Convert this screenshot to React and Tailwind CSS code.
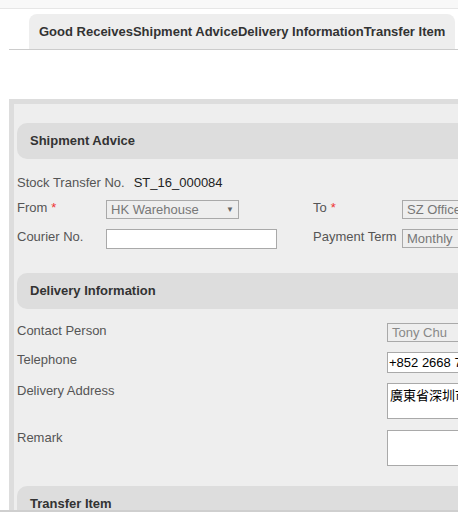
import React from 'react';

const font = { fontFamily: '"Liberation Sans", Arial, "Noto Sans CJK TC", sans-serif' };

const SectionHeader = ({ title }) => (
  <div className="h-[36px] rounded-[10px] bg-[#dddddd] flex items-center pl-[13px] text-[13px] font-bold text-[#333]">
    {title}
  </div>
);

const Select = ({ value, width }) => (
  <div
    className="h-[19px] border border-[#a9a9a9] bg-[#eee] flex items-center justify-between px-[4px] text-[13px] text-[#777] shrink-0"
    style={{ width }}
  >
    <span className="whitespace-nowrap">{value}</span>
    <span className="text-[8px] text-[#666]">▼</span>
  </div>
);

const Label = ({ children, req, className = '' }) => (
  <div className={`text-[13px] text-[#555] whitespace-nowrap ${className}`}>
    {children}
    {req && <span className="text-[#e33] ml-[4px]">*</span>}
  </div>
);

const App = () => {
  return (
    <div className="relative w-[458px] h-[512px] overflow-hidden bg-white" style={font}>
      <div className="h-[9px] bg-[#f8f8f8] border-b border-[#e6e6e6]" />
      <div className="ml-[9px] w-[600px] pt-[5px] pl-[20px] border-b border-[#cccccc]">
        <div className="w-[426px] h-[35px] rounded-t-[8px] bg-[#eeeeee] flex items-center pl-[10px] text-[13px] font-bold text-[#333] whitespace-nowrap">
          <span>Good Receives</span>
          <span>Shipment Advice</span>
          <span>Delivery Information</span>
          <span>Transfer Item</span>
        </div>
      </div>

      <div className="ml-[9px] mt-[49px] w-[700px] border-l-[5px] border-t-[5px] border-[#dddddd] bg-[#eeeeee] pl-[3px] pt-[19px]">
        <SectionHeader title="Shipment Advice" />

        <div className="mt-[15px] h-[18px] flex items-center text-[13px]">
          <span className="text-[#555]">Stock Transfer No.</span>
          <span className="ml-[9px] text-[#222]">ST_16_000084</span>
        </div>

        <div className="mt-[8px] flex items-start">
          <div className="w-[296px] flex items-start">
            <Label req className="w-[89px] leading-[16px]">From</Label>
            <Select value="HK Warehouse" width={133} />
          </div>
          <Label req className="w-[89px] leading-[16px]">To</Label>
          <Select value="SZ Office" width={120} />
        </div>

        <div className="mt-[10px] flex items-start">
          <div className="w-[296px] flex items-start">
            <Label className="w-[89px] leading-[16px]">Courier No.</Label>
            <div className="w-[171px] h-[20px] border border-[#a9a9a9] bg-white" />
          </div>
          <Label className="w-[89px] leading-[16px]">Payment Term</Label>
          <Select value="Monthly" width={120} />
        </div>

        <div className="mt-[24px]">
          <SectionHeader title="Delivery Information" />
        </div>

        <div className="mt-[14px] flex items-start">
          <Label className="w-[370px] leading-[16px]">Contact Person</Label>
          <div className="w-[120px] h-[19px] border border-[#a9a9a9] bg-[#eee] flex items-center px-[4px] text-[13px] text-[#888]">
            Tony Chu
          </div>
        </div>

        <div className="mt-[10px] flex items-start">
          <Label className="w-[370px] leading-[16px]">Telephone</Label>
          <div className="w-[120px] h-[21px] border border-[#a9a9a9] bg-white flex items-center px-[1px] text-[13px] text-black whitespace-nowrap">
            +852 2668 7788
          </div>
        </div>

        <div className="mt-[10px] flex items-start">
          <Label className="w-[370px] leading-[16px]">Delivery Address</Label>
          <div
            className="w-[120px] h-[36px] border border-[#a9a9a9] bg-white px-[2px] pt-[1px] text-[13px] text-black whitespace-nowrap overflow-hidden"
            style={{ fontFamily: '"Noto Sans CJK TC", sans-serif' }}
          >
            廣東省深圳市龍華區
          </div>
        </div>

        <div className="mt-[11px] flex items-start">
          <Label className="w-[370px] leading-[16px]">Remark</Label>
          <div className="w-[120px] h-[36px] border border-[#a9a9a9] bg-white" />
        </div>

        <div className="mt-[20px]">
          <SectionHeader title="Transfer Item" />
        </div>
        <div className="h-[40px]" />
      </div>

      <div className="absolute left-0 right-0 bottom-0 h-[2px] bg-[#cfcfcf]" />
    </div>
  );
};

export default App;
